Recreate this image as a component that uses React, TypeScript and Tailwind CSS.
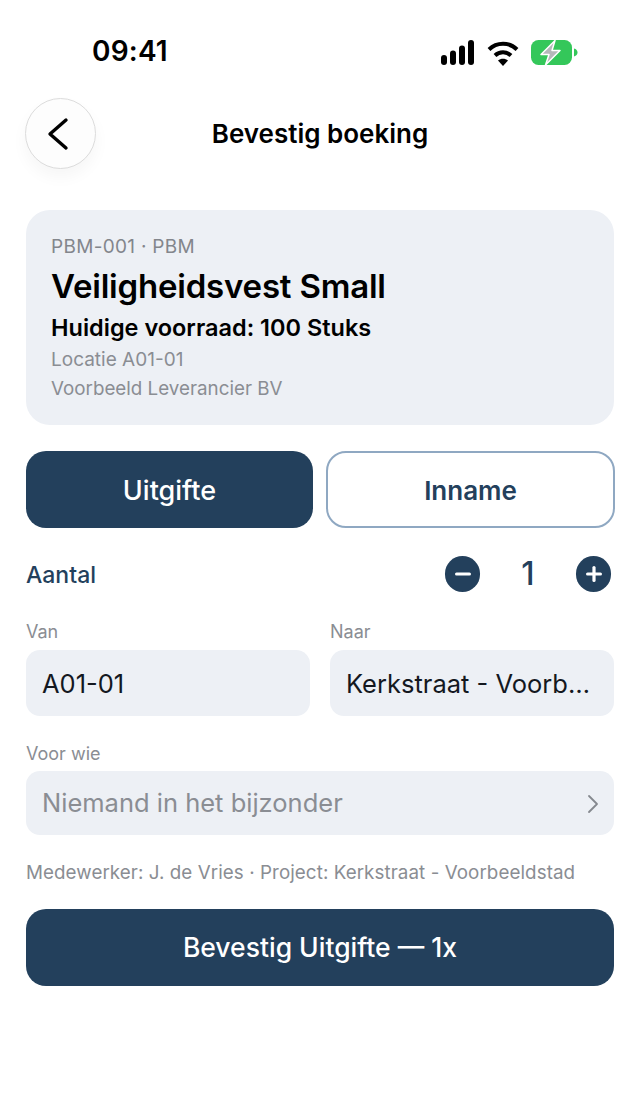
import { Minus, Plus } from 'lucide-react';

function StatusIcons() {
  return (
    <div className="flex items-center gap-[12px]">
      {/* signal */}
      <svg width="34" height="26" viewBox="0 0 34 26" className="w-[34px] h-[26px]">
        <rect x="0" y="15" width="6" height="10" rx="3" fill="#000" />
        <rect x="9" y="10.5" width="6" height="14.5" rx="3" fill="#000" />
        <rect x="18" y="5.5" width="6" height="19.5" rx="3" fill="#000" />
        <rect x="27" y="0" width="6" height="25" rx="3" fill="#000" />
      </svg>
      {/* wifi */}
      <svg width="32" height="26" viewBox="0 0 32 26" className="w-[32px] h-[26px]" fill="none" stroke="#000" strokeWidth="4">
        <path d="M2 9.5C9.8 1.8 22.2 1.8 30 9.5" />
        <path d="M8 15.5C12.6 11.2 19.4 11.2 24 15.5" />
        <path d="M16 26l-5-5.5c2.8-2.4 7.2-2.4 10 0z" fill="#000" stroke="none" />
      </svg>
      {/* battery */}
      <svg width="47" height="27" viewBox="0 0 47 27" className="w-[47px] h-[27px]">
        <rect x="0" y="1" width="41" height="25" rx="7.5" fill="#34c75a" />
        <path d="M43 9.5c2.4.6 3.5 2.2 3.5 4s-1.100 3.400-3.500 4z" fill="#34c75a" />
        <path d="M24 1.500 10 15.500h8L14.500 26 29 11.500h-8z" fill="#b5b8ba" stroke="#fff" strokeWidth="1.500" strokeLinejoin="round" />
      </svg>
    </div>
  );
}

function Field({ label, value, className }: { label: string; value: string; className?: string }) {
  return (
    <div className={`min-w-0 ${className ?? ''}`}>
      <p className="text-[18px] leading-[20px] text-[#8a8d93] mb-[8px]">{label}</p>
      <div className="h-[66px] rounded-[14px] bg-[#edf0f5] pl-[16px] pr-[24px] pt-[2px] flex items-center">
        <span className="text-[25.5px] text-[#14181f] truncate">{value}</span>
      </div>
    </div>
  );
}

export default function App() {
  return (
    <div className="relative w-[640px] h-[1113px] bg-white overflow-hidden" style={{ fontFamily: 'Inter, sans-serif' }}>
      {/* Status bar */}
      <div className="h-[98px] pl-[92px] pr-[62px] pt-[33px] flex items-start justify-between">
        <span className="text-[28px] leading-[36px] font-semibold text-black tracking-[0.2px]">09:41</span>
        <div className="pt-[6px]">
          <StatusIcons />
        </div>
      </div>

      {/* Header */}
      <div className="relative h-[70px] flex items-center justify-center px-[26px]">
        <button className="absolute left-[25px] top-0 w-[71px] h-[71px] rounded-full bg-[#fdfdfd] border border-[#dcdcdc] shadow-[0_8px_16px_rgba(0,0,0,0.04)] flex items-center justify-center">
          <svg width="24" height="34" viewBox="0 0 24 34" fill="none" stroke="#000" strokeWidth="3.4" strokeLinecap="round" strokeLinejoin="round" className="-ml-[5px]">
            <path d="M20 3 4 17l16 14" />
          </svg>
        </button>
        <h1 className="text-[26px] font-semibold text-black">Bevestig boeking</h1>
      </div>

      <div className="px-[26px] pt-[42px]">
        {/* Item card */}
        <div className="h-[215px] rounded-[24px] bg-[#edf0f5] pl-[25px] pt-[25px]">
          <p className="text-[19px] leading-[24px] tracking-[0.3px] text-[#83868c]">PBM-001 · PBM</p>
          <h2 className="text-[33px] leading-[44px] font-semibold tracking-[-0.2px] text-black mt-[5px]">Veiligheidsvest Small</h2>
          <p className="text-[23.5px] leading-[30px] font-semibold text-black mt-[5px]">Huidige voorraad: 100 Stuks</p>
          <p className="text-[19px] leading-[24px] text-[#8a8d93] mt-[5px]">Locatie A01-01</p>
          <p className="text-[18.8px] leading-[24px] text-[#8a8d93] mt-[5px]">Voorbeeld Leverancier BV</p>
        </div>

        {/* Type toggle */}
        <div className="flex gap-[13px] mt-[26px] -mr-[1px]">
          <button className="w-[287px] h-[77px] pt-[3px] rounded-[20px] bg-[#23405c] text-white text-[27px] font-medium">Uitgifte</button>
          <button className="flex-1 h-[77px] pt-[2px] rounded-[20px] bg-white border-[2.5px] border-[#8fa8c2] text-[#23405c] text-[26px] font-semibold">Inname</button>
        </div>

        {/* Quantity */}
        <div className="flex items-center justify-between mt-[28px] h-[36px]">
          <span className="text-[23px] font-medium text-[#23405c] pt-[2px]">Aantal</span>
          <div className="flex items-center mr-[3px]">
            <button className="w-[35px] h-[36px] rounded-full bg-[#23405c] flex items-center justify-center">
              <Minus size={22} strokeWidth={3.5} className="text-white" />
            </button>
            <span className="w-[96px] text-center text-[32px] font-medium text-[#23405c]">1</span>
            <button className="w-[35px] h-[36px] rounded-full bg-[#23405c] flex items-center justify-center">
              <Plus size={22} strokeWidth={3.5} className="text-white" />
            </button>
          </div>
        </div>

        {/* Van / Naar */}
        <div className="grid grid-cols-2 gap-[20px] mt-[30px]">
          <Field label="Van" value="A01-01" />
          <Field label="Naar" value="Kerkstraat - Voorbeeldstad" />
        </div>

        {/* Voor wie */}
        <div className="mt-[27px]">
          <p className="text-[18px] leading-[20px] text-[#8a8d93] pt-[1px] mb-[7px]">Voor wie</p>
          <div className="h-[64px] rounded-[14px] bg-[#edf0f5] pl-[16px] pr-[15px] pt-[1px] flex items-center justify-between">
            <span className="text-[25.5px] text-[#8a8d93]">Niemand in het bijzonder</span>
            <svg width="12" height="20" viewBox="0 0 12 20" fill="none" stroke="#85888e" strokeWidth="1.8" strokeLinecap="round" strokeLinejoin="round">
              <path d="M2 2l8 8-8 8" />
            </svg>
          </div>
        </div>

        <p className="text-[18.8px] leading-[24px] tracking-[0.07px] whitespace-nowrap text-[#8a8d93] mt-[26px] -mb-[1px]">Medewerker: J. de Vries · Project: Kerkstraat - Voorbeeldstad</p>

        <button className="w-full h-[77px] rounded-[20px] bg-[#23405c] text-white text-[26.5px] font-medium mt-[25px]">Bevestig Uitgifte — 1x</button>
      </div>
    </div>
  );
}
